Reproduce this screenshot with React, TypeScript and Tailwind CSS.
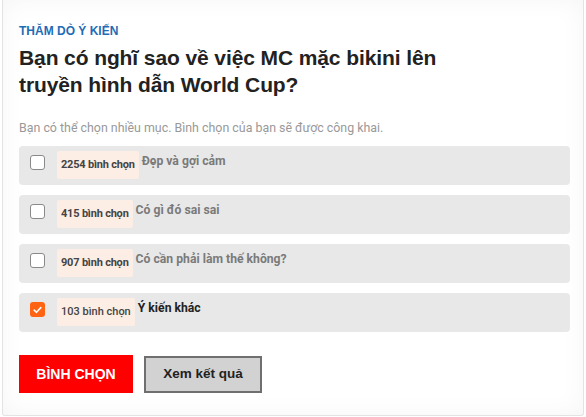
import { useState } from "react";

const options = [
  { votes: 2254, label: "Đẹp và gợi cảm" },
  { votes: 415, label: "Có gì đó sai sai" },
  { votes: 907, label: "Có cần phải làm thế không?" },
  { votes: 103, label: "Ý kiến khác" },
];

export default function App() {
  const [checked, setChecked] = useState<number[]>([3]);

  const toggle = (i: number) =>
    setChecked((c) => (c.includes(i) ? c.filter((x) => x !== i) : [...c, i]));

  return (
    <div className="w-[586px] h-[417px] bg-white">
      <div className="mx-[2px] h-[416px] border border-t-0 border-[#e3e3e3] rounded-b-[3px] shadow-[inset_0_0_24px_rgba(0,0,0,0.045)] px-4 pt-[23px] font-['Liberation_Sans',Arial,sans-serif]">
        {/* Header */}
        <div className="text-[12px] font-bold text-[#1f6cb5] leading-[16px]">THĂM DÒ Ý KIẾN</div>
        <h2 className="mt-[5px] text-[21px] font-bold text-[#222] leading-[27px] tracking-[-0.1px]">
          Bạn có nghĩ sao về việc MC mặc bikini lên
          <br />
          truyền hình dẫn World Cup?
        </h2>
        <p className="mt-[22px] text-[12.4px] text-[#999] leading-[16px] font-['Roboto',sans-serif]">
          Bạn có thể chọn nhiều mục. Bình chọn của bạn sẽ được công khai.
        </p>

        {/* Options */}
        <div className="mt-[10px] flex flex-col gap-[10px] w-[551px]">
          {options.map((o, i) => {
            const on = checked.includes(i);
            return (
              <label
                key={o.label}
                onClick={() => toggle(i)}
                className="h-[39px] rounded-[4px] bg-[#e8e8e8] flex items-start pt-[5px] pl-[11px] cursor-pointer font-['Roboto',sans-serif]"
              >
                <span
                  className={`mt-[4px] w-[15px] h-[15px] rounded-[3px] flex items-center justify-center shrink-0 ${
                    on ? "bg-[#ff6415]" : "bg-white border border-[#8a8a8a]"
                  }`}
                >
                  {on && (
                    <svg width="9" height="8" viewBox="0 0 9 8" fill="none">
                      <path d="M1.2 4.2 3.5 6.3 7.8 1.6" stroke="white" strokeWidth="1.6" strokeLinecap="round" strokeLinejoin="round" />
                    </svg>
                  )}
                </span>
                <span
                  className={`ml-[12px] h-[28px] px-[4px] bg-[#fdeee5] rounded-[2px] flex items-center text-[11px] text-[#444] whitespace-nowrap ${
                    on ? "font-medium" : "font-bold tracking-[-0.2px]"
                  }`}
                >
                  {o.votes} bình chọn
                </span>
                <span
                  className={`ml-[3px] mt-[3px] text-[12.2px] leading-[14px] font-bold ${
                    on ? "text-[#222]" : "text-[#7a7a7a]"
                  }`}
                >
                  {o.label}
                </span>
              </label>
            );
          })}
        </div>

        {/* Actions */}
        <div className="mt-[23px] flex items-center gap-[11px]">
          <button className="w-[114px] h-[38px] bg-[#ff0000] text-white text-[14px] font-bold">
            BÌNH CHỌN
          </button>
          <button className="w-[118px] h-[37px] bg-[#d2d2d2] border-2 border-[#6f6f6f] text-[#222] text-[13.5px] font-bold">
            Xem kết quả
          </button>
        </div>
      </div>
    </div>
  );
}
